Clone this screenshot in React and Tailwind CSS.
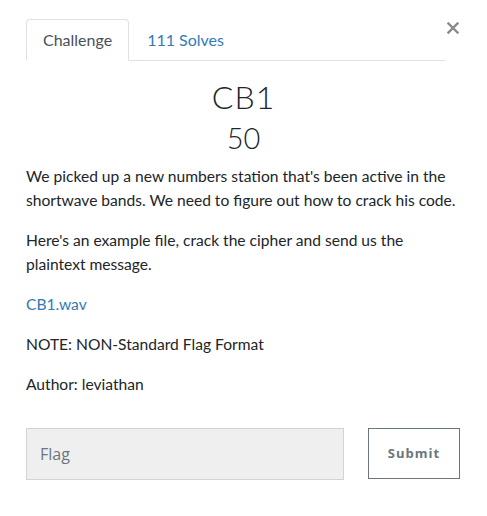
import React from 'react';

export default function App() {
  return (
    <div className="w-[487px] h-[516px] bg-white px-[26px] pt-[19px] text-[#212529]" style={{ fontFamily: 'Lato, "Liberation Sans", sans-serif' }}>
      {/* Tabs */}
      <div className="flex items-start">
        <div className="flex w-[419px] border-b border-[#dee2e6]">
          <div className="h-[42px] -mb-px px-4 flex items-center border border-[#dee2e6] border-b-white rounded-t bg-white text-[16px] text-[#495057]">
            Challenge
          </div>
          <div className="h-[41px] px-[18px] flex items-center text-[16px] text-[#337ab7]">111 Solves</div>
        </div>
        <button className="w-[14px] mt-[3px] text-[#8a8a8a] ml-auto">
          <svg viewBox="0 0 12 12" className="w-[12px] h-[12px]" stroke="currentColor" strokeWidth="2.4" strokeLinecap="square">
            <path d="M1.5 1.5 L10.5 10.5 M10.5 1.5 L1.5 10.5" />
          </svg>
        </button>
      </div>

      {/* Title */}
      <div className="text-center mt-[16px]">
        <h2 className="text-[32px] leading-[40px] font-light tracking-[1px]">CB1</h2>
        <h3 className="text-[29px] leading-[40px] mt-[1px] font-light">50</h3>
      </div>

      {/* Description */}
      <div className="mt-[6px] text-[15.6px] leading-[24px]">
        <p className="mb-4">We picked up a new numbers station that's been active in the shortwave bands. We need to figure out how to crack his code.</p>
        <p className="mb-4">Here's an example file, crack the cipher and send us the plaintext message.</p>
        <p className="mb-4"><a className="text-[#337ab7]">CB1.wav</a></p>
        <p className="mb-4">NOTE: NON-Standard Flag Format</p>
        <p>Author: leviathan</p>
      </div>

      {/* Flag form */}
      <div className="flex items-start mt-[32px]">
        <div className="w-[318px] h-[52px] bg-[#efefef] border border-[#d0d4d9] flex items-center px-[13px] text-[16px] text-[#6c757d]" style={{ fontFamily: '"Open Sans", sans-serif' }}>
          Flag
        </div>
        <button className="ml-[24px] w-[92px] h-[51px] border border-[#6c757d] text-[13px] font-bold tracking-[1px] text-[#6c757d]" style={{ fontFamily: '"Open Sans", sans-serif' }}>
          Submit
        </button>
      </div>
    </div>
  );
}
